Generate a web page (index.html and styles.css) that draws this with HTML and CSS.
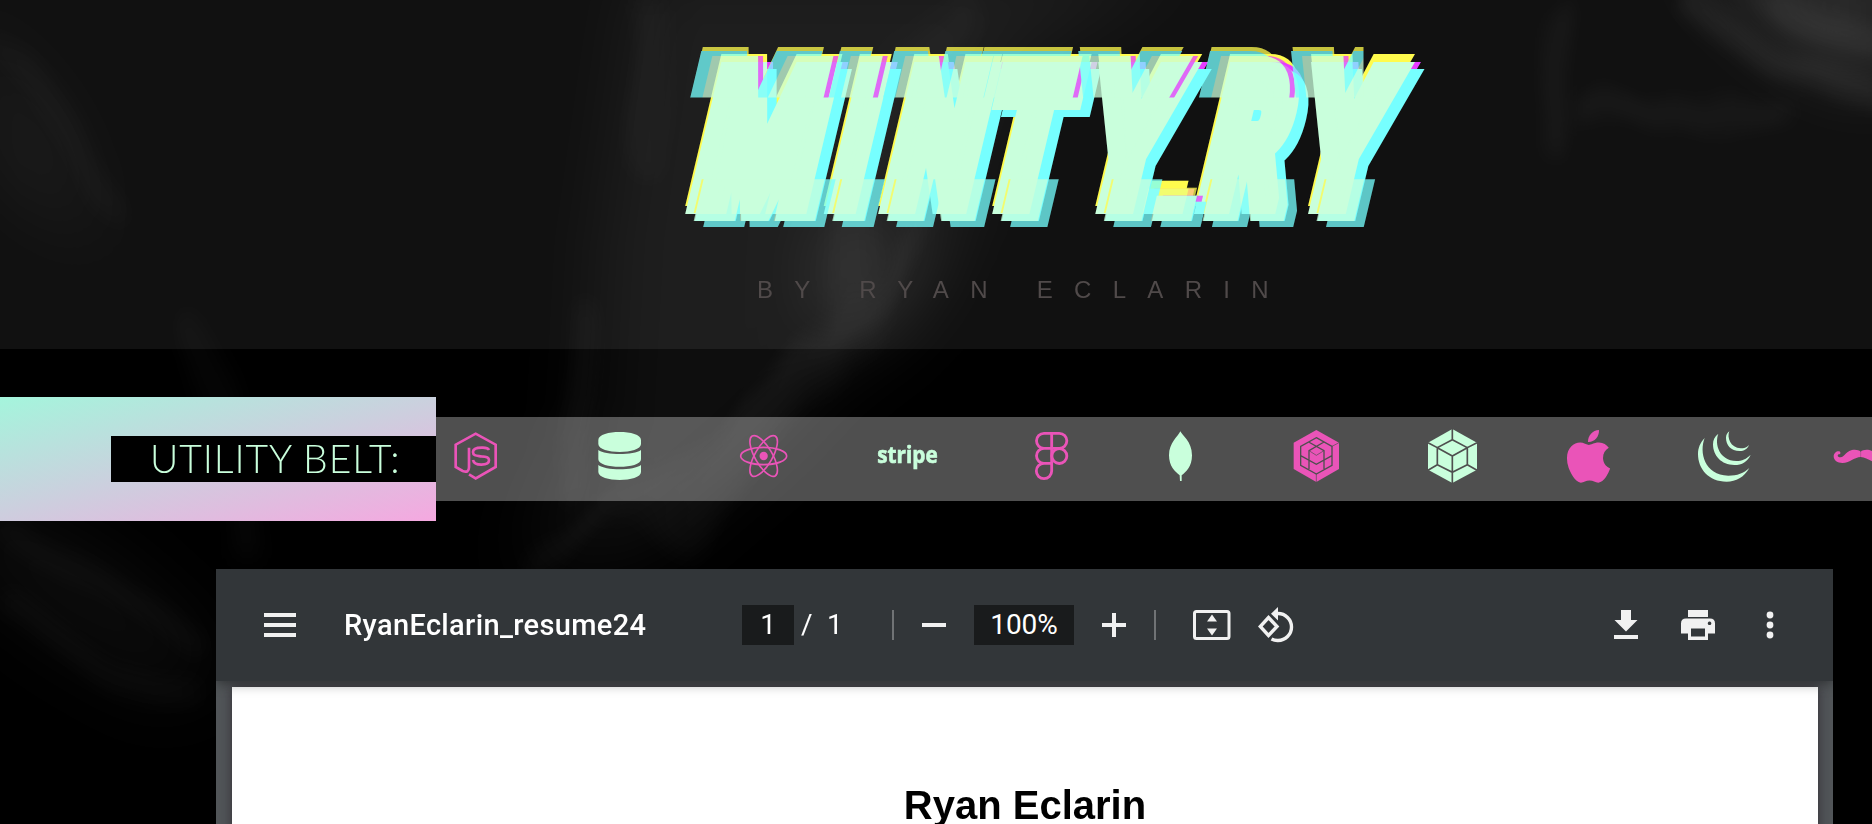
FILE: index.html
```html
<!DOCTYPE html>
<html lang="en">
<head>
<meta charset="utf-8">
<title>Minty.Ry</title>
<link rel="stylesheet" href="styles.css">
</head>
<body>
<svg class="smoke" viewBox="0 0 1872 824" aria-hidden="true">
  <defs>
    <filter id="wisp" x="-20%" y="-20%" width="140%" height="140%">
      <feGaussianBlur stdDeviation="12" result="b"/>
      <feTurbulence type="fractalNoise" baseFrequency="0.012 0.006" numOctaves="2" seed="4" result="n"/>
      <feDisplacementMap in="b" in2="n" scale="40"/>
    </filter>
    <filter id="haze" x="-30%" y="-30%" width="160%" height="160%"><feGaussianBlur stdDeviation="38"/></filter>
  </defs>
  <g fill="#fff" filter="url(#haze)">
    <path opacity=".055" d="M640 -40H1200L1010 60 960 240 880 330 780 440 640 560 520 570 590 420 600 240Z"/>
    <path opacity=".09" d="M820 200L930 240 890 330 810 330Z"/>
    <path opacity=".12" d="M1680 -50H1900V90L1800 60Z"/>
    <path opacity=".05" d="M-40 0L60 120 110 260 0 180ZM-40 480L110 560 220 660 170 700 60 640-40 560Z"/>
  </g>
  <g fill="none" stroke="#fff" filter="url(#wisp)">
    <path opacity=".04" stroke-width="20" d="M650 0C650 80 640 120 650 180M580 300C600 380 560 420 570 500M930 200C880 320 700 480 520 570"/>
    <path opacity=".03" stroke-width="40" d="M980 10C880 60 820 180 850 330C820 420 740 440 660 540"/>
    <path opacity=".09" stroke-width="18" d="M1690 0C1740 50 1800 80 1890 90M1760 -10C1800 30 1850 40 1890 45"/>
    <path opacity=".05" stroke-width="18" d="M1560 0C1550 60 1555 110 1550 150M1580 115C1660 120 1720 100 1800 125"/>
    <path opacity=".04" stroke-width="16" d="M0 40C50 90 70 150 120 220M190 320C220 400 240 460 250 560M0 520C60 590 110 560 200 650M0 600C60 620 90 700 200 690"/>
  </g>
</svg>

<header class="hero">
  <svg class="logo" viewBox="670 30 780 210" role="img" aria-label="MINTY.RY">
    <defs>
      <g id="word" transform="translate(0 214) skewX(-13.4)">
        <text class="logo-text" transform="scale(.62 1)" y="-12"><tspan x="1108" textLength="190" lengthAdjust="spacingAndGlyphs">M</tspan><tspan x="1329" textLength="51" lengthAdjust="spacingAndGlyphs">I</tspan><tspan x="1419" textLength="137" lengthAdjust="spacingAndGlyphs">N</tspan><tspan x="1569" textLength="124" lengthAdjust="spacingAndGlyphs">T</tspan><tspan x="1735" textLength="124" lengthAdjust="spacingAndGlyphs">Y</tspan><tspan class="logo-dot" x="1827" y="-3" textLength="96" lengthAdjust="spacingAndGlyphs">.</tspan><tspan x="1928" y="-12" textLength="121" lengthAdjust="spacingAndGlyphs">R</tspan><tspan x="2078" textLength="124" lengthAdjust="spacingAndGlyphs">Y</tspan></text>
      </g>
      <g id="glitch">
        <use href="#word" y="-8" class="yellow"/>
        <use href="#word" x="6" class="magenta"/>
        <use href="#word" x="9.5" y="6.7" class="cyan"/>
        <use href="#word" class="face"/>
      </g>
      <g id="glitch-up">
        <use href="#word" x="-9.5" y="-9.5" class="yellow"/>
        <use href="#word" x="5" class="magenta"/>
        <use href="#word" x="-11" y="-5" class="cyan"/>
        <use href="#word" class="face"/>
      </g>
      <clipPath id="top"><path d="M670 30H1363.500V97.500H670Z"/></clipPath>
      <clipPath id="bottom"><path d="M670 179.300H1450V240H670Z"/></clipPath>
    </defs>
    <use href="#glitch"/>
    <g clip-path="url(#top)" opacity=".76"><use href="#glitch-up" x="-9" y="-6"/></g>
    <g clip-path="url(#bottom)" opacity=".76"><use href="#glitch" x="8.500" y="6.500"/></g>
  </svg>
  <p class="byline">BY RYAN ECLARIN</p>
</header>

<section class="belt">
  <div class="belt-label"><h2>UTILITY BELT:</h2></div>
  <div class="strip">
    <div class="icons icons-a">
      <svg class="pink line" viewBox="18 51 240 252"><path stroke-width="8" d="M117 223L137 235 197 201V134L137 101 77 134V201L98 213Q117 220 117 202V143M177 150C173 142 164 143 155 143C138 143 129 148 129 156C129 168 140 167 154 169C168 170 177 171 177 181C177 191 168 194 154 194C138 194 131 190 129 180"/></svg>
      <svg class="mint" viewBox="450 51 240 252"><path d="M505 120C505 88 633 88 633 120V132C633 164 505 164 505 132ZM505 150C525 166 613 166 633 150V178C633 208 505 208 505 178ZM505 195C525 212 613 212 633 195V216C633 248 505 248 505 216Z"/></svg>
      <svg class="pink line" viewBox="882 51 240 252"><g stroke-width="5"><ellipse cx="1001" cy="168" rx="69" ry="26"/><ellipse cx="1001" cy="168" rx="69" ry="26" transform="rotate(60 1001 168)"/><ellipse cx="1001" cy="168" rx="69" ry="26" transform="rotate(120 1001 168)"/></g><circle cx="1001" cy="168" r="12.500" fill="#ea54b8" stroke="none"/></svg>
      <svg class="mint" viewBox="204 51 240 252"><text class="stripe" x="232" y="190" textLength="181" lengthAdjust="spacingAndGlyphs">stripe</text></svg>
      <svg class="pink line" viewBox="636 51 240 252"><path stroke-width="8.500" d="M755 100V213A23 23 0 1 1 732 190H755M755 100H732A22.500 22.500 0 0 0 732 145H778A22.500 22.500 0 0 0 778 100H755M755 145H732A22.500 22.500 0 0 0 732 190"/><circle cx="778" cy="168" r="22.500" stroke-width="8.500"/></svg>
    </div>
    <div class="icons icons-b">
      <svg class="mint" viewBox="1023 51 240 252"><path d="M1141 94C1146 106 1176 124 1176 166C1176 200 1158 216 1145 226L1145 243H1140L1139 226C1125 215 1107 199 1107 166C1107 128 1134 110 1141 94Z"/></svg>
      <svg class="pink" viewBox="111 51 240 252"><path d="M229 90L297 128V207L229 246 161 207V128Z"/><g fill="none" stroke="#4f4f4f" stroke-width="4"><path d="M229 113L276 139V196L229 222 182 196V139ZM206 126L252 152V207M252 126L207 152V207M182 167L229 193 276 167"/><path stroke-width="2" d="M207 152L229 166 252 152M229 222V246M276 139L297 128"/></g></svg>
      <svg class="mint" viewBox="519 51 240 252"><path d="M637 87L711 128V209L637 249 564 209V128Z"/><path fill="none" stroke="#4f4f4f" stroke-width="5" d="M637 85V119M637 168V251M564 128L592 143 637 119 682 143 711 128M592 143V194L564 211M682 143V194L711 211M592 143L637 168 682 143M592 194L637 217 682 194"/></svg>
      <svg class="pink" viewBox="27 51 240 252"><path transform="translate(79.500 78) scale(.344 .354)" d="M318.700 268.700c-.2-36.700 16.400-64.400 50-84.800-18.800-26.900-47.200-41.700-84.700-44.600-35.500-2.800-74.300 20.700-88.500 20.700-15 0-49.400-19.700-76.400-19.700C63.300 141.200 4 184.800 4 273.500q0 39.300 14.400 81.200c12.800 36.700 59 126.700 107.200 125.200 25.200-.6 43-17.900 75.800-17.900 31.800 0 48.300 17.900 76.400 17.900 48.600-.7 90.400-82.500 102.600-119.300-65.200-30.700-61.700-90-61.700-91.900z"/><path d="M177 90C178 110 163 127 144 126C143 107 158 91 177 90Z"/></svg>
      <svg class="mint" viewBox="435 51 240 252"><path d="M494 114C477 157 493 225 565 227C592 227 611 220 628 204C612 232 588 245 560 245C506 245 474 207 474 162C474 143 481 128 494 114ZM535 101C523 133 538 181 589 183C606 183 619 177 632 164C623 185 606 195 583 195C544 195 519 167 519 133C519 120 524 110 535 101ZM568 94C560 113 572 144 602 145C612 145 619 143 627 135C622 148 612 153 599 153C573 153 558 135 558 114C558 105 562 98 568 94Z"/></svg>
      <svg class="pink" viewBox="843 51 240 252"><path d="M962 155C955 148 939 147 928 153C914 160 912 171 902 172C894 173 890 165 896 163C902 163 902 158 900 155C893 151 881 158 881 169C881 182 893 189 907 189C931 188 944 171 962 171C980 171 993 188 1017 189C1031 189 1043 182 1043 169C1043 158 1031 151 1024 155C1022 158 1022 163 1028 163C1034 165 1030 173 1022 172C1012 171 1010 160 996 153C985 147 969 148 962 155Z"/><path stroke="#4f4f4f" d="M962 153V172"/></svg>
    </div>
  </div>
</section>

<main class="viewer">
  <div class="toolbar">
    <svg class="menu" width="32" height="24" viewBox="0 0 32 24"><path d="M0 0H32V4H0ZM0 10H32V14H0ZM0 20H32V24H0Z"/></svg>
    <span class="doc">RyanEclarin_resume24</span>
    <span class="box page-no">1</span>
    <span class="slash">/</span>
    <span class="count">1</span>
    <i class="sep"></i>
    <svg class="minus" width="24" height="24" viewBox="0 0 24 24"><path d="M0 10H24V14H0Z"/></svg>
    <span class="box zoom">100%</span>
    <svg class="plus" width="24" height="24" viewBox="0 0 24 24"><path d="M0 10H10V0H14V10H24V14H14V24H10V14H0Z"/></svg>
    <i class="sep sep-b"></i>
    <svg class="fit" width="38" height="30" viewBox="0 0 38 30"><rect x="1.500" y="1.500" width="34.500" height="27" rx="2" fill="none" stroke="#f1f1f1" stroke-width="3"/><path d="M19 4.500L24 11.500H14ZM19 25.500L24 18.500H14Z"/></svg>
    <svg class="rotate" width="36" height="36" viewBox="0 0 36 36"><path fill="none" stroke="#f1f1f1" stroke-width="3.400" d="M10.500 10.500L19 19.500 10.500 28.500 2.300 19.500ZM17.500 6.500H20A13.500 13.500 0 0 1 20 33.500Q16.500 33.600 13.500 32"/><path d="M20 0V13.500L13 6.700Z"/></svg>
    <div class="actions">
      <svg width="24" height="30" viewBox="0 0 24 30"><path d="M7 0H17V10H23.500L12 21.500 .5 10H7ZM0 25H24V29H0Z"/></svg>
      <svg width="34" height="30" viewBox="0 0 34 30"><path fill-rule="evenodd" d="M7 0H27V7H7ZM5 8.500H29Q34 8.500 34 13.500V23.500H27V30H7V23.500H0V13.500Q0 8.500 5 8.500ZM10 18.500V26.500H24V18.500ZM28.500 11.500A1.800 1.800 0 1 0 28.600 11.500Z"/></svg>
      <svg width="8" height="28" viewBox="0 0 8 28"><circle cx="4" cy="4" r="3.400"/><circle cx="4" cy="14" r="3.400"/><circle cx="4" cy="24" r="3.400"/></svg>
    </div>
  </div>
  <div class="sheet-area">
    <article class="sheet"><h1>Ryan Eclarin</h1></article>
  </div>
</main>
</body>
</html>
```

FILE: styles.css
```css
* { box-sizing: border-box; }
body {
  margin: 0;
  height: 824px;
  overflow: hidden;
  position: relative;
  background: #000;
  font-family: "Liberation Sans", Arial, sans-serif;
}
svg { display: block; flex: none; }
.smoke { position: absolute; inset: 0; width: 1872px; height: 824px; z-index: -1; }

.hero {
  height: 349px;
  padding-top: 30px;
  background: rgba(255, 255, 255, .065);
}
.logo { width: 780px; height: 210px; margin-left: 670px; }
.logo-text {
  font: 900 180px Roboto, sans-serif;
  stroke-width: 24;
  stroke-linejoin: miter;
}
.logo-dot { font: 700 130px "Liberation Sans", sans-serif; stroke-width: 6; }
.yellow { fill: #fffb4d; stroke: #fffb4d; }
.magenta { fill: #e63cff; stroke: #e63cff; }
.cyan { fill: #76ffff; stroke: #76ffff; }
.face { fill: #c9ffdc; stroke: #c9ffdc; }
.byline {
  margin: 36px 0 0 757px;
  font-size: 24px;
  line-height: 28px;
  letter-spacing: 21.3px;
  color: #504a4a;
  white-space: nowrap;
}

.belt { display: flex; align-items: center; height: 124px; margin-top: 48px; }
.belt-label {
  width: 436px;
  height: 124px;
  flex: none;
  display: flex;
  align-items: center;
  justify-content: flex-end;
  background: linear-gradient(166deg, #a4f5dc, #f5a8e0);
}
.belt-label h2 {
  margin: 0;
  width: 325px;
  height: 46px;
  padding-left: 39px;
  background: #000;
  color: #c9ffdc;
  font: 300 39px/44px Lato, sans-serif;
  letter-spacing: .9px;
  white-space: nowrap;
}
.strip {
  flex: 1;
  min-width: 0;
  height: 84px;
  overflow: hidden;
  display: flex;
  gap: 49px;
  background: rgba(255, 255, 255, .31);
}
.icons { display: flex; flex: none; }
.icons svg { width: 80px; height: 84px; }
.icons-a { gap: 64px; }
.icons-b { gap: 56px; }
.pink { fill: #ea54b8; }
.mint { fill: #c9ffdc; }
.line { fill: none; stroke: #ea54b8; }
.stripe { font: 700 71px "Open Sans", sans-serif; stroke: #c9ffdc; stroke-width: 2; }

.viewer { width: 1617px; height: 255px; margin: 48px 0 0 216px; background: #525659; overflow: hidden; }
.toolbar {
  position: relative;
  z-index: 1;
  height: 112px;
  padding: 0 59px 0 48px;
  display: flex;
  align-items: center;
  background: #323639;
  box-shadow: 0 2px 12px rgba(0, 0, 0, .45);
  color: #fff;
  fill: #f1f1f1;
  font: 400 28px/40px Roboto, sans-serif;
}
.doc { width: 305px; margin-left: 48px; font-size: 29px; font-weight: 500; letter-spacing: .35px; white-space: nowrap; }
.box { height: 40px; background: #191b1c; text-align: center; }
.page-no { width: 52px; margin-left: 93px; }
.slash { width: 14px; margin-left: 7px; }
.count { width: 16px; margin-left: 12px; }
.sep { width: 2px; height: 30px; margin-left: 49px; background: #707375; }
.minus { margin-left: 28px; }
.zoom { width: 100px; margin-left: 28px; }
.plus { margin-left: 28px; }
.sep-b { margin-left: 28px; }
.fit { margin-left: 37px; }
.rotate { margin-left: 27px; }
.actions { margin-left: auto; display: flex; align-items: center; gap: 43px; }
.actions svg:last-child { margin-left: 8px; }

.sheet-area { padding: 6px 15px 0 16px; }
.sheet { height: 150px; background: #fff; box-shadow: 0 0 12px rgba(30, 20, 30, .6); }
.sheet h1 {
  margin: 0;
  padding-top: 95px;
  text-align: center;
  font-size: 40px;
  line-height: 46px;
  color: #000;
}
```
